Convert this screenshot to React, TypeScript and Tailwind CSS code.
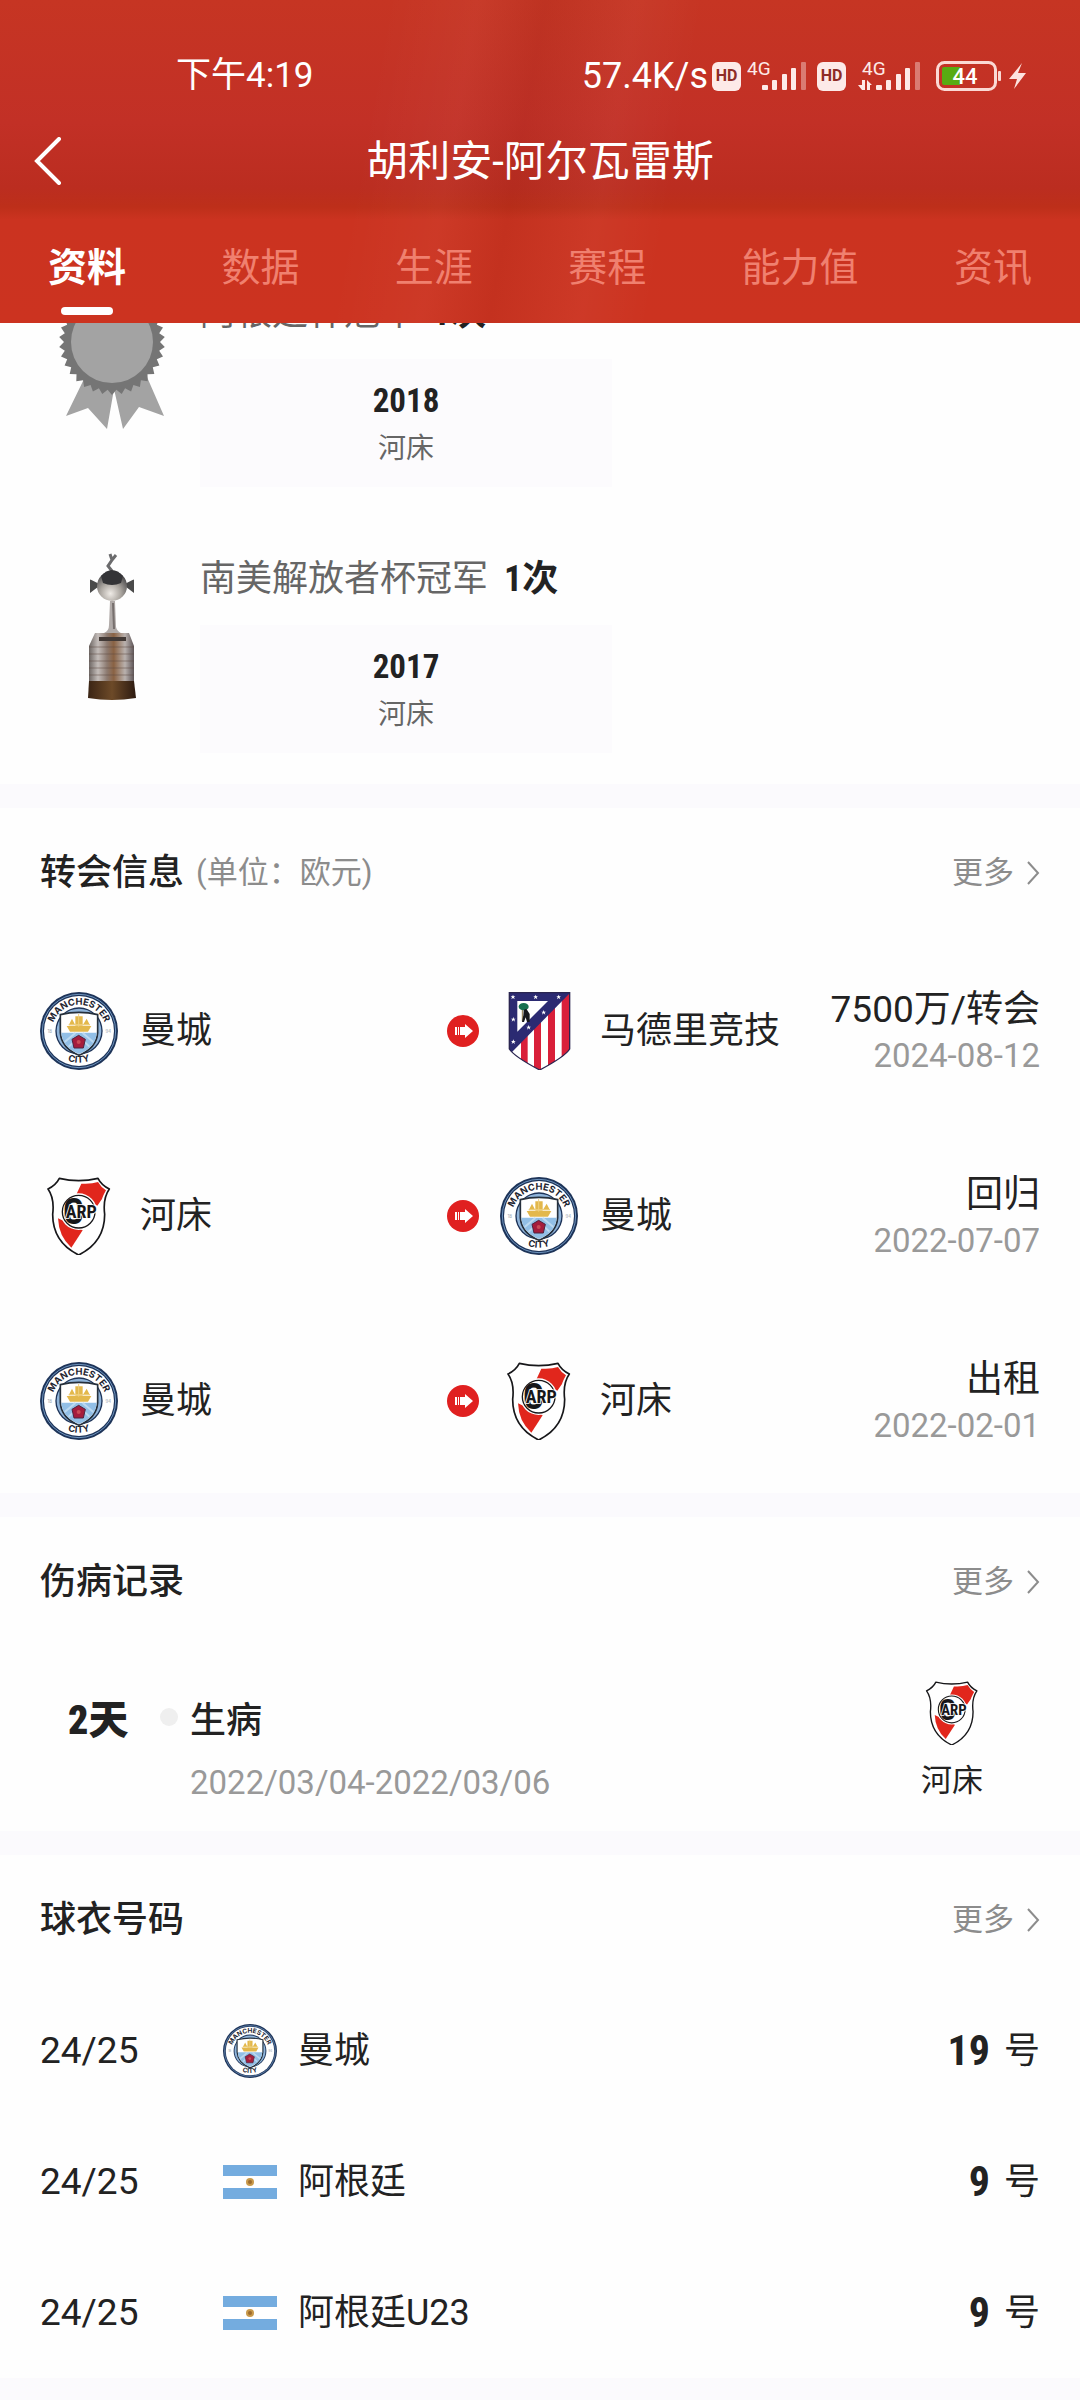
import React, { useId, useState } from 'react';

type Team = 'city' | 'atletico' | 'river' | 'argentina';

interface Award {
  icon: React.ReactNode;
  title: string;
  count: number;
  year: string;
  club: string;
}

interface Transfer {
  from: Team;
  to: Team;
  type: string;
  date: string;
}

const teamNames: Record<Team, string> = {
  city: '曼城',
  atletico: '马德里竞技',
  river: '河床',
  argentina: '阿根廷',
};

const tabs = ['资料', '数据', '生涯', '赛程', '能力值', '资讯'];

const transfers: Transfer[] = [
  { from: 'city', to: 'atletico', type: '7500万/转会', date: '2024-08-12' },
  { from: 'river', to: 'city', type: '回归', date: '2022-07-07' },
  { from: 'city', to: 'river', type: '出租', date: '2022-02-01' },
];

const shirtNumbers: { season: string; team: Team; name: string; number: number }[] = [
  { season: '24/25', team: 'city', name: '曼城', number: 19 },
  { season: '24/25', team: 'argentina', name: '阿根廷', number: 9 },
  { season: '24/25', team: 'argentina', name: '阿根廷U23', number: 9 },
];

/* ---------- Crests ---------- */

const CityCrest: React.FC<{ className?: string }> = ({ className }) => {
  const id = useId();
  return (
    <svg viewBox="18 18 234 234" className={className} aria-hidden="true">
      <circle cx="135" cy="135" r="117" fill="#1d3358" />
      <circle cx="135" cy="135" r="110" fill="none" stroke="#6f95bf" strokeWidth="3" />
      <circle cx="135" cy="135" r="105" fill="#fff" />
      <circle cx="135" cy="135" r="71" fill="#1d3358" />
      <circle cx="135" cy="135" r="67" fill="#8fb4da" />
      <path d="M79 86 Q135 72 191 86 V140 Q188 186 135 208 Q82 186 79 140 Z" fill="#fff" stroke="#26303c" strokeWidth="5" />
      <path d="M82 140 H188 Q185 184 135 204 Q85 184 82 140 Z" fill="#92bfe6" />
      <path d="M92 168 L124 141 M104 182 L122 166 M178 168 L146 141 M166 182 L150 166" stroke="#bcd9f0" strokeWidth="6" />
      <path d="M98 120 H172 L162 137 H108 Z M104 118 L114 98 L124 118 Z M124 119 V91 H146 V119 Z M146 118 L158 98 L168 118 Z" fill="#e3b84c" />
      <path d="M134 84 V122 M104 116 H168" stroke="#efd07e" strokeWidth="3" />
      <path d="M134 148 L154 160 L148 186 H120 L114 160 Z" fill="#a51d3d" stroke="#4f2440" strokeWidth="3" />
      <circle cx="134" cy="168" r="6" fill="#c94a55" />
      <path id={`${id}top`} d="M54 151 A82 82 0 1 1 216 151" fill="none" />
      <path id={`${id}bottom`} d="M41 160 A98 98 0 0 0 229 160" fill="none" />
      <text fontFamily="Inter, sans-serif" fontWeight="700" fontSize="28" fill="#1f2631" textAnchor="middle">
        <textPath href={`#${id}top`} startOffset="50%">MANCHESTER</textPath>
      </text>
      <text fontFamily="Inter, sans-serif" fontWeight="700" fontSize="28" fill="#1f2631" textAnchor="middle">
        <textPath href={`#${id}bottom`} startOffset="50%">CITY</textPath>
      </text>
      <g fontFamily="Inter, sans-serif" fontSize="13" fill="#9aa3ad" textAnchor="middle">
        <text x="47" y="141">18</text>
        <text x="223" y="141">94</text>
      </g>
    </svg>
  );
};

const star = 'M0 -7 L2 -2 L7 -2 L3 1 L5 7 L0 3 L-5 7 L-3 1 L-7 -2 L-2 -2 Z';

const AtleticoCrest: React.FC<{ className?: string }> = ({ className }) => {
  const id = useId();
  return (
    <svg viewBox="15 18 234 234" className={className} aria-hidden="true">
      <clipPath id={id}>
        <path d="M43 20 H224 V189 Q210 212 134 252 Q58 212 43 189 Z" />
      </clipPath>
      <g clipPath={`url(#${id})`}>
        <rect x="40" y="18" width="190" height="240" fill="#fff" />
        <path d="M78 100 H98 V260 H78 Z M117 60 H138 V260 H117 Z M159 50 H180 V260 H159 Z M200 20 H226 V260 H200 Z" fill="#d9203a" />
        <path d="M40 18 H228 L43 206 Z" fill="#2b2a72" />
        <path d="M67 45 H159 L67 137 Z" fill="#fff" />
      </g>
      <path d="M43 20 H224 V189 Q210 212 134 252 Q58 212 43 189 Z" fill="none" stroke="#2a2550" strokeWidth="4" />
      <path d="M82 66 V106" stroke="#8a7446" strokeWidth="3" />
      <ellipse cx="86" cy="62" rx="15" ry="11" fill="#16704f" />
      <path d="M86 72 L94 68 L104 84 L104 108 H96 L92 94 L87 108 H81 L85 88 Z" fill="#17171c" />
      <g fill="#fff">
        {[[54, 33], [122, 33], [191, 33], [55, 100], [55, 167], [146, 79], [101, 124]].map(([x, y]) => (
          <path key={`${x}-${y}`} d={star} transform={`translate(${x} ${y})`} />
        ))}
      </g>
    </svg>
  );
};

const RiverCrest: React.FC<{ className?: string }> = ({ className }) => (
  <svg viewBox="18 18 234 234" className={className} aria-hidden="true">
    <path
      d="M76 22 Q134 36 192 22 Q202 42 226 54 Q206 82 212 130 Q212 214 134 252 Q56 214 56 130 Q62 82 42 54 Q66 42 76 22 Z"
      fill="#fff"
      stroke="#17171a"
      strokeWidth="5"
      strokeLinejoin="round"
    />
    <path d="M142 38 Q172 40 192 33 Q202 50 216 58 Q206 76 204 84 L190 104 L128 68 Z" fill="#e1261c" />
    <path d="M72 142 L146 178 L112 230 Q74 196 72 142 Z" fill="#e1261c" />
    <circle cx="134" cy="122" r="55" fill="#fff" />
    <circle cx="134" cy="122" r="49" fill="none" stroke="#17171a" strokeWidth="4" />
    <g fontFamily="'Roboto Condensed', Roboto, sans-serif" fontWeight="700" fill="#17171a" textAnchor="middle">
      <text x="118" y="160" fontSize="108">C</text>
      <text x="142" y="142" fontSize="54" stroke="#fff" strokeWidth="5" paintOrder="stroke">ARP</text>
    </g>
  </svg>
);

const ArgentinaFlag: React.FC<{ className?: string }> = ({ className }) => (
  <svg viewBox="0 0 54 34" className={className} aria-hidden="true">
    <rect width="54" height="34" fill="#fff" />
    <rect width="54" height="11" fill="#74acdf" />
    <rect y="23" width="54" height="11" fill="#74acdf" />
    <circle cx="27" cy="17" r="4" fill="#c99a4b" />
    <circle cx="27" cy="17" r="2" fill="#9c6b2f" />
  </svg>
);

const TeamLogo: React.FC<{ team: Team; className?: string }> = ({ team, className }) => {
  if (team === 'city') return <CityCrest className={className} />;
  if (team === 'atletico') return <AtleticoCrest className={className} />;
  if (team === 'river') return <RiverCrest className={className} />;
  return <ArgentinaFlag className={className} />;
};

/* ---------- Award pictures ---------- */

const teeth = Array.from({ length: 68 }, (_, i) => {
  const angle = (i * Math.PI) / 34;
  const r = i % 2 ? 48 : 53;
  return `${(55 + r * Math.sin(angle)).toFixed(1)},${(55 + r * Math.cos(angle)).toFixed(1)}`;
}).join(' ');

const Medal = () => (
  <svg viewBox="0 0 110 148" className="w-[110px] h-[148px]" aria-hidden="true">
    <path d="M27 92 L9 129 L31 121 L50 142 L57 102 Z" fill="#a3a3a3" />
    <path d="M57 102 L66 142 L82 120 L107 129 L90 90 Z" fill="#a3a3a3" />
    <polygon points={teeth} fill="#757575" />
    <circle cx="55" cy="55" r="41" fill="#a3a3a3" />
  </svg>
);

const Trophy = () => (
  <svg viewBox="0 0 110 148" className="w-[110px] h-[148px]" aria-hidden="true">
    <defs>
      <linearGradient id="silver" x1="0" x2="1">
        <stop offset="0" stopColor="#6d6663" />
        <stop offset="0.2" stopColor="#c4bdba" />
        <stop offset="0.4" stopColor="#8c7a70" />
        <stop offset="0.55" stopColor="#8a6243" />
        <stop offset="0.8" stopColor="#b9b1ae" />
        <stop offset="1" stopColor="#5e5557" />
      </linearGradient>
      <linearGradient id="wood" x1="0" x2="1">
        <stop offset="0" stopColor="#3a2414" />
        <stop offset="0.5" stopColor="#6d4a28" />
        <stop offset="1" stopColor="#2c1a10" />
      </linearGradient>
      <radialGradient id="ball" cx="0.45" cy="0.75" r="0.7">
        <stop offset="0" stopColor="#efebe6" />
        <stop offset="0.5" stopColor="#aaa59f" />
        <stop offset="1" stopColor="#4b4a4c" />
      </radialGradient>
    </defs>
    <path d="M53 1 L55 7 L51 13 L55 18 M55 7 L59 2" fill="none" stroke="#6b6b6d" strokeWidth="3" />
    <path d="M34 28 L42 32 L34 38 Z M76 28 L68 32 L76 38 Z" fill="#4a4a4a" stroke="#4a4a4a" strokeWidth="2" />
    <circle cx="55" cy="33" r="15" fill="url(#ball)" />
    <path d="M44 23 Q55 11 66 23 L64 30 Q55 34 46 30 Z" fill="#343437" />
    <path d="M53 48 H58 L59 74 Q60 78 64 80 H47 Q52 78 52 72 Z" fill="#b0aaa8" />
    <path d="M56 50 L57 76" stroke="#77706e" strokeWidth="2" />
    <path d="M38 80 H72 L77 93 V132 H32 V93 Z" fill="url(#silver)" />
    <path d="M42 86 H69" stroke="#433a36" strokeWidth="4" />
    <path d="M32 94 H77 M32 101 H77 M32 108 H77 M32 115 H77 M32 122 H77" stroke="#5b4a42" strokeOpacity="0.5" />
    <path d="M32 128 H77 L79 145 Q55 149 31 145 Z" fill="url(#wood)" />
  </svg>
);

const awards: Award[] = [
  { icon: <Medal />, title: '阿根廷杯冠军', count: 1, year: '2018', club: '河床' },
  { icon: <Trophy />, title: '南美解放者杯冠军', count: 1, year: '2017', club: '河床' },
];

/* ---------- Status bar ---------- */

const HdBadge = () => (
  <span className="flex h-[29px] w-[29px] items-center justify-center rounded-md bg-[#fdeae8] text-[16px] font-bold text-[#8e2c26]">
    HD
  </span>
);

const Signal: React.FC<{ arrows?: boolean }> = ({ arrows }) => (
  <svg viewBox="0 0 64 36" className="h-9 w-16" aria-hidden="true">
    <text x={arrows ? 4 : 0} y="17" fontFamily="Roboto, sans-serif" fontSize="19" fill="#fdeae8">4G</text>
    <g fill="#fdeae8">
      {arrows && <path d="M4 22 V32 H7 V22 Z M0 27 H4 V32 Z M9 32 V22 L14 27 H12 V32 Z" />}
      <rect x={arrows ? 18 : 15} y="27" width="6" height="5" rx="1" />
      <rect x={arrows ? 28 : 25} y="22" width="5" height="10" rx="1" />
      <rect x={arrows ? 38 : 35} y="16" width="5" height="16" rx="1" />
      <rect x={arrows ? 47 : 44} y="10" width="5" height="22" rx="1" />
      <rect x={arrows ? 57 : 54} y="4" width="5" height="28" rx="1" fillOpacity="0.4" />
    </g>
  </svg>
);

const Battery = () => (
  <svg viewBox="0 0 92 30" className="h-[30px] w-[92px]" aria-hidden="true">
    <rect x="1.5" y="1.5" width="58" height="27" rx="7" fill="none" stroke="#fbd9d4" strokeWidth="3" />
    <path d="M6 8 Q6 6 8 6 H24 V24 H8 Q6 24 6 22 Z" fill="#57ab12" />
    <rect x="62" y="10" width="3" height="10" rx="1" fill="#fbd9d4" />
    <text x="29" y="23" textAnchor="middle" fontFamily="Roboto, sans-serif" fontWeight="500" fontSize="22" fill="#fff">44</text>
    <path d="M86 2 L73 18 H81 L78 28 L90 12 H82 Z" fill="#fde3df" />
  </svg>
);

/* ---------- Page pieces ---------- */

const TransferArrow = () => (
  <svg viewBox="0 0 32 32" className="h-8 w-8 shrink-0" aria-hidden="true">
    <circle cx="16" cy="16" r="16" fill="#e02020" />
    <path d="M8 12 H10 V20 H8 Z M11 12 H12 V20 H11 Z M13 12 H18 V9 L26 16 L18 23 V20 H13 Z" fill="#fff" />
  </svg>
);

const SectionHeader: React.FC<{ title: string; note?: string }> = ({ title, note }) => (
  <div className="flex h-[130px] items-center px-10">
    <h2 className="text-[36px] font-medium text-[#222]">{title}</h2>
    {note && <span className="ml-3 text-[31px] text-[#8c8c8c]">{note}</span>}
    <a href="#" className="ml-auto flex items-center gap-3 text-[31px] text-[#8c8c8c]">
      更多
      <svg viewBox="0 0 14 24" className="h-6 w-[14px]" aria-hidden="true">
        <path d="M2 1 L12 12 L2 23" fill="none" stroke="#8c8c8c" strokeWidth="2" />
      </svg>
    </a>
  </div>
);

const Divider = () => <div className="h-6 bg-[#fbfafd]" />;

export default function App() {
  const [activeTab, setActiveTab] = useState('资料');

  return (
    <div className="min-h-screen bg-[#fefefe] font-['Roboto','Noto_Sans_CJK_SC',sans-serif] text-[#222]">
      {/* Header */}
      <header className="bg-[linear-gradient(100deg,transparent_34%,#ffffff08_42%,#0000000a_48%,#ffffff08_56%,transparent_62%),linear-gradient(#c63523_0%,#c23026_38%,#bb2d20_58%,#bd2f1a_64%,#cb3320_68%,#cc3320_100%)] text-white">
        <div className="flex h-[111px] items-end pb-[14px] pl-44 pr-13">
          <span className="text-[35px] leading-[42px]">下午4:19</span>
          <div className="ml-auto flex items-center">
            <span className="mr-1 text-[36px] leading-[42px]">57.4K/s</span>
            <HdBadge />
            <span className="ml-[6px] mr-[6px]"><Signal /></span>
            <HdBadge />
            <span className="ml-3 mr-[14px]"><Signal arrows /></span>
            <Battery />
          </div>
        </div>

        <div className="grid h-[100px] grid-cols-[1fr_auto_1fr] items-center px-8">
          <button aria-label="返回" className="justify-self-start">
            <svg viewBox="0 0 32 48" className="h-12 w-8" aria-hidden="true">
              <path d="M27 2 L5 24 L27 46" fill="none" stroke="#fff" strokeWidth="4" strokeLinecap="round" />
            </svg>
          </button>
          <h1 className="text-[42px]">胡利安-阿尔瓦雷斯</h1>
        </div>

        <nav className="flex h-28 justify-between px-12 pt-7">
          {tabs.map(tab => (
            <button
              key={tab}
              onClick={() => setActiveTab(tab)}
              className={`flex flex-col items-center gap-[10px] text-[39px] leading-[58px] ${
                tab === activeTab ? 'font-bold text-white' : 'text-[#f0806f]'
              }`}
            >
              {tab}
              {tab === activeTab && <span className="h-2 w-13 rounded-sm bg-white" />}
            </button>
          ))}
        </nav>
      </header>

      {/* Awards, scrolled partly under the header */}
      <section className="overflow-hidden pb-[31px]">
        <ul className="-mt-9 space-y-[66px]">
          {awards.map(award => (
            <li key={award.title} className="flex h-[200px] gap-4 px-10">
              <div className="flex w-36 shrink-0 justify-center self-start">{award.icon}</div>
              <div>
                <p className="flex h-[52px] items-center gap-4 text-[36px] leading-[52px] text-[#666]">
                  {award.title}
                  <span className="font-['Roboto_Condensed','Roboto','Noto_Sans_CJK_SC',sans-serif] font-bold text-[#222]">
                    {award.count}次
                  </span>
                </p>
                <div className="mt-5 w-[412px] bg-[#fcfbfd] pb-3 pt-5 text-center">
                  <p className="font-['Roboto_Condensed','Roboto',sans-serif] text-[33px] font-bold leading-[44px] text-[#222]">
                    {award.year}
                  </p>
                  <p className="text-[28px] leading-[52px] text-[#666]">{award.club}</p>
                </div>
              </div>
            </li>
          ))}
        </ul>
      </section>

      <Divider />

      {/* Transfers */}
      <section>
        <SectionHeader title="转会信息" note="(单位：欧元)" />
        <ul>
          {transfers.map(item => (
            <li key={item.date} className="grid h-[185px] grid-cols-[407fr_593fr] items-center px-10 text-[36px]">
              <div className="flex items-center gap-[22px]">
                <TeamLogo team={item.from} className="h-[78px] w-[78px]" />
                <span>{teamNames[item.from]}</span>
              </div>
              <div className="flex items-center">
                <TransferArrow />
                <TeamLogo team={item.to} className="ml-[21px] mr-[22px] h-[78px] w-[78px]" />
                <span>{teamNames[item.to]}</span>
                <div className="ml-auto pt-1 text-right">
                  <p className="text-[37px] leading-[46px]">{item.type}</p>
                  <p className="text-[33px] leading-[46px] text-[#999]">{item.date}</p>
                </div>
              </div>
            </li>
          ))}
        </ul>
      </section>

      <Divider />

      {/* Injuries */}
      <section>
        <SectionHeader title="伤病记录" />
        <div className="flex h-[184px] items-start px-10 pt-[34px]">
          <span className="w-[120px] pl-7 pt-3 font-['Roboto_Condensed','Roboto','Noto_Sans_CJK_SC',sans-serif] text-[40px] font-black leading-[56px]">
            2天
          </span>
          <span className="mt-[27px] h-[18px] w-[18px] rounded-full bg-[#efefef]" />
          <div className="ml-3 pt-3">
            <p className="text-[36px] font-medium leading-[56px]">生病</p>
            <p className="mt-1 text-[33px] leading-[60px] text-[#999]">2022/03/04-2022/03/06</p>
          </div>
          <div className="ml-auto mr-14 flex flex-col items-center">
            <RiverCrest className="h-16 w-16" />
            <span className="mt-3 text-[31px] leading-[48px]">河床</span>
          </div>
        </div>
      </section>

      <Divider />

      {/* Shirt numbers */}
      <section>
        <SectionHeader title="球衣号码" />
        <table className="w-full text-[36px]">
          <tbody>
            {shirtNumbers.map(row => (
              <tr key={row.name} className="h-[131px]">
                <td className="w-[223px] pl-10 text-[37px]">{row.season}</td>
                <td>
                  <div className="flex items-center gap-[21px]">
                    <TeamLogo team={row.team} className="w-[54px]" />
                    <span>{row.name}</span>
                  </div>
                </td>
                <td className="pr-10">
                  <div className="flex items-center justify-end gap-[14px]">
                    <span className="font-['Roboto_Condensed','Roboto',sans-serif] text-[42px] font-bold leading-[52px]">
                      {row.number}
                    </span>
                    <span>号</span>
                  </div>
                </td>
              </tr>
            ))}
          </tbody>
        </table>
      </section>

      <Divider />
    </div>
  );
}
